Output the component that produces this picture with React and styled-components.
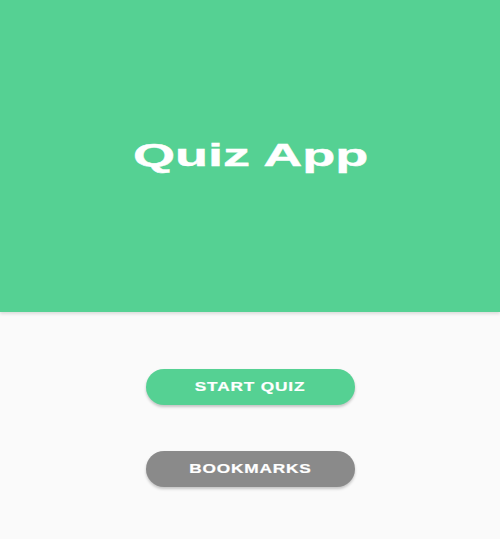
import styled, { createGlobalStyle } from 'styled-components';

const GlobalStyle = createGlobalStyle`
    html, body {
        margin: 0;
        padding: 0;
        background-color: #fafafa;
        font-family: 'Liberation Sans', Arial, sans-serif;
    }
`

const Screen = styled.div`
    display: flex;
    flex-direction: column;
    height: 539px;
    width: 500px;
    background-color: #fafafa;
`

const Header = styled.header`
    align-items: center;
    background-color: #55d193;
    box-shadow: 0 2px 3px rgba(0, 0, 0, 0.12);
    display: flex;
    height: 312px;
    justify-content: center;
`

const Title = styled.h1`
    color: #ffffff;
    display: inline-block;
    font-size: 32px;
    font-weight: 700;
    margin: -2px 0 0 1px;
    transform: scaleX(1.69);
    -webkit-text-stroke: 0.4px #ffffff;
`

const Actions = styled.div`
    align-items: center;
    display: flex;
    flex-direction: column;
    gap: 46px;
    padding-top: 57px;
`

const Button = styled.button`
    align-items: center;
    background-color: ${p => p.$color};
    border: none;
    border-radius: 18px;
    box-shadow: 0 2px 3px rgba(0, 0, 0, 0.22);
    color: #ffffff;
    display: flex;
    font-family: 'Liberation Sans', Arial, sans-serif;
    font-size: 12.5px;
    font-weight: 700;
    height: 36px;
    justify-content: center;
    padding: 0;
    width: 209px;
`

const Label = styled.span`
    display: inline-block;
    letter-spacing: 0.6px;
    transform: scaleX(1.38);
    -webkit-text-stroke: 0.2px #ffffff;
`

export default function App(){
    return(
        <Screen>
            <GlobalStyle />
            <Header>
                <Title>Quiz App</Title>
            </Header>
            <Actions>
                <Button $color={'#55d193'}>
                    <Label>START QUIZ</Label>
                </Button>
                <Button $color={'#8a8a8a'}>
                    <Label>BOOKMARKS</Label>
                </Button>
            </Actions>
        </Screen>
    )
}
